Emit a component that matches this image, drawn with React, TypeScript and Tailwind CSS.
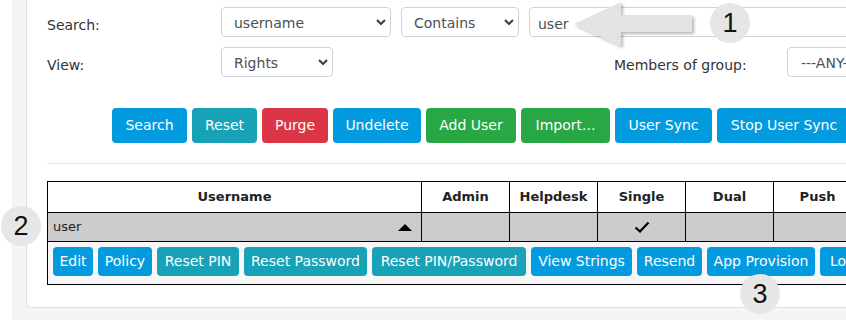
import React from "react";

const Chevron = () => (
  <svg width="10" height="6" viewBox="0 0 10 6" className="shrink-0">
    <path d="M1 1l4 4 4-4" stroke="#343a40" strokeWidth="2" fill="none" />
  </svg>
);

function Sel({ w, text }: { w: string; text: string }) {
  return (
    <div
      className={`flex h-[30px] shrink-0 items-center justify-between rounded-[4px] border border-[#ced4da] bg-white pl-[12px] pr-[4px] text-[14px] text-[#495057] ${w}`}
    >
      <span className="whitespace-nowrap pt-[3px]">{text}</span>
      <Chevron />
    </div>
  );
}

function Btn({ c, w, h, children }: { c: string; w: string; h: string; children: React.ReactNode }) {
  return (
    <div
      className={`flex shrink-0 items-center justify-center whitespace-nowrap rounded-[4px] text-[14px] text-white ${c} ${w} ${h}`}
    >
      {children}
    </div>
  );
}

const BLUE = "bg-[#039be0]";
const TEAL = "bg-[#17a2b8]";

function Circle({ n, cls }: { n: string; cls: string }) {
  return (
    <div
      className={`absolute flex h-[40px] w-[40px] items-center justify-center rounded-full bg-[#e6e6e6] font-['Liberation_Sans',sans-serif] text-[27px] text-[#111] ${cls}`}
    >
      {n}
    </div>
  );
}

export default function App() {
  return (
    <div className="relative flex h-[320px] w-[846px] overflow-hidden bg-white font-['DejaVu_Sans',sans-serif] text-[#333]">
      <div className="w-[12px] shrink-0 bg-white" />
      <div className="flex-1 bg-[#f5f5f5] pl-[14px]">
        <div className="h-[308px] w-[900px] rounded-bl-[5px] border-b border-l border-[#dedede] bg-white pl-[20px] pt-[7px]">
          {/* Row 1 */}
          <div className="flex h-[30px] items-center">
            <div className="mt-[6px] w-[174px] shrink-0 text-[14px] text-[#333]">Search:</div>
            <Sel w="w-[170px]" text="username" />
            <div className="w-[10px] shrink-0" />
            <Sel w="w-[118px]" text="Contains" />
            <div className="w-[10px] shrink-0" />
            <div className="flex h-[30px] w-[360px] shrink-0 items-center rounded-[4px] border border-[#ced4da] bg-white pl-[8px] text-[14px] text-[#495057]">
              <span className="pt-[4px]">user</span>
            </div>
          </div>
          {/* Row 2 */}
          <div className="mt-[10px] flex h-[30px] items-center">
            <div className="mt-[6px] w-[174px] shrink-0 text-[14px] text-[#333]">View:</div>
            <Sel w="w-[112px]" text="Rights" />
            <div className="ml-[281px] mt-[6px] w-[173px] shrink-0 text-[14px] text-[#333]">Members of group:</div>
            <div className="flex h-[30px] w-[140px] shrink-0 items-center rounded-[4px] border border-[#ced4da] bg-white pl-[13px] text-[14px] text-[#495057]">
              <span className="pt-[3px]">---ANY---</span>
            </div>
          </div>
          {/* Buttons */}
          <div className="mt-[31px] flex gap-[5px] pl-[65px]">
            <Btn c={BLUE} w="w-[75px]" h="h-[35px]">Search</Btn>
            <Btn c={TEAL} w="w-[65px]" h="h-[35px]">Reset</Btn>
            <Btn c="bg-[#dc3545]" w="w-[66px]" h="h-[35px]">Purge</Btn>
            <Btn c={BLUE} w="w-[88px]" h="h-[35px]">Undelete</Btn>
            <Btn c="bg-[#28a745]" w="w-[90px]" h="h-[35px]">Add User</Btn>
            <Btn c="bg-[#28a745]" w="w-[89px]" h="h-[35px]">Import...</Btn>
            <Btn c={BLUE} w="w-[97px]" h="h-[35px]">User Sync</Btn>
            <Btn c={BLUE} w="w-[134px]" h="h-[35px]">Stop User Sync</Btn>
          </div>
          {/* Separator */}
          <div className="mt-[20px] h-px w-[840px] bg-[#e3e3e3]" />
          {/* Table */}
          <div className="mt-[17px] w-[900px] border border-black">
            <div className="flex h-[31px] border-b border-black text-[13px] font-bold text-[#222]">
              <div className="flex w-[374px] shrink-0 items-center justify-center border-r border-black">Username</div>
              <div className="flex w-[88px] shrink-0 items-center justify-center border-r border-black">Admin</div>
              <div className="flex w-[88px] shrink-0 items-center justify-center border-r border-black">Helpdesk</div>
              <div className="flex w-[88px] shrink-0 items-center justify-center border-r border-black">Single</div>
              <div className="flex w-[88px] shrink-0 items-center justify-center border-r border-black">Dual</div>
              <div className="flex w-[88px] shrink-0 items-center justify-center border-r border-black">Push</div>
            </div>
            <div className="flex h-[29px] border-b border-black bg-[#cccccc] text-[13px] text-[#222]">
              <div className="flex w-[374px] shrink-0 items-center justify-between border-r border-black pl-[5px] pr-[9px]">
                <span>user</span>
                <svg width="14" height="7" viewBox="0 0 14 7">
                  <path d="M7 0L14 7H0z" fill="#000" />
                </svg>
              </div>
              <div className="w-[88px] shrink-0 border-r border-black" />
              <div className="w-[88px] shrink-0 border-r border-black" />
              <div className="flex w-[88px] shrink-0 items-center justify-center border-r border-black">
                <svg width="16" height="12" viewBox="0 0 16 12">
                  <path d="M1.5 6.5l4.5 4L14.5 1.5" stroke="#000" strokeWidth="2.2" fill="none" />
                </svg>
              </div>
              <div className="w-[88px] shrink-0 border-r border-black" />
              <div className="w-[88px] shrink-0 border-r border-black" />
            </div>
            <div className="flex h-[42px] gap-[5px] bg-[#f7f7f7] pl-[5px] pt-[5px]">
              <Btn c={BLUE} w="w-[40px]" h="h-[29px]">Edit</Btn>
              <Btn c={BLUE} w="w-[54px]" h="h-[29px]">Policy</Btn>
              <Btn c={TEAL} w="w-[82px]" h="h-[29px]">Reset PIN</Btn>
              <Btn c={TEAL} w="w-[123px]" h="h-[29px]">Reset Password</Btn>
              <Btn c={TEAL} w="w-[154px]" h="h-[29px]">Reset PIN/Password</Btn>
              <Btn c={BLUE} w="w-[101px]" h="h-[29px]">View Strings</Btn>
              <Btn c={BLUE} w="w-[65px]" h="h-[29px]">Resend</Btn>
              <Btn c={BLUE} w="w-[108px]" h="h-[29px]">App Provision</Btn>
              <Btn c={BLUE} w="w-[52px]" h="h-[29px]">Lock</Btn>
            </div>
          </div>
        </div>
      </div>

      {/* Annotations */}
      <svg className="absolute left-[560px] top-0" width="145" height="56" viewBox="0 0 145 56">
        <defs>
          <filter id="sh" x="-20%" y="-30%" width="140%" height="160%">
            <feDropShadow dx="2" dy="2" stdDeviation="1.8" floodColor="#000" floodOpacity="0.28" />
          </filter>
        </defs>
        <path d="M14 24L61 2V15H132V32H61V46Z" fill="#e3e3e3" filter="url(#sh)" />
      </svg>
      <Circle n="1" cls="left-[710px] top-[3px]" />
      <Circle n="2" cls="left-[1px] top-[206px]" />
      <Circle n="3" cls="left-[740px] top-[274px]" />
    </div>
  );
}
